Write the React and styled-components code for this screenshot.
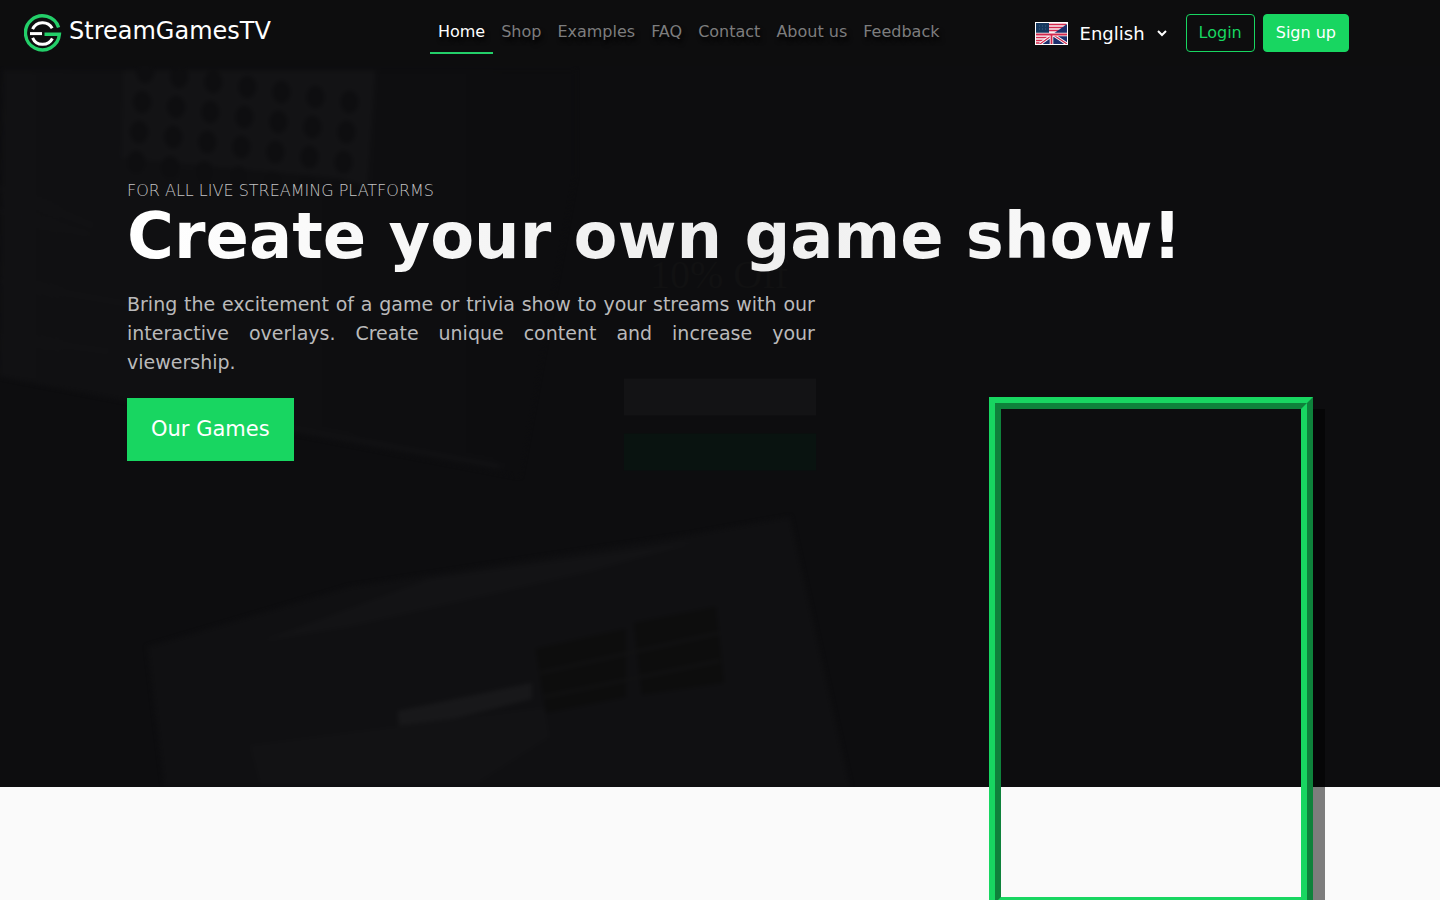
import React, { useState } from 'react';
import styled, { createGlobalStyle } from 'styled-components';

const links = ['Home', 'Shop', 'Examples', 'FAQ', 'Contact', 'About us', 'Feedback'];

const keys = [];
for (let row = 0; row < 4; row++) {
    for (let col = 0; col < 7; col++) {
        keys.push({ x: 146 + col * 34 - row * 3, y: 6 + row * 30 + col * 5 });
    }
}

const Logo = () => (
    <svg width="38" height="38" viewBox="0 0 38 38" fill="none" aria-hidden="true">
        <path d="M34.6 13.5A17 17 0 1 0 35.4 20.2H20.5" stroke="#23cf69" strokeWidth="3.4" />
        <path d="M28.2 14.2A11 11 0 0 0 8.6 15.2" stroke="#fff" strokeWidth="3" />
        <path d="M6 19.6H18" stroke="#fff" strokeWidth="3" />
        <path d="M8.6 23.8A11 11 0 0 0 28.4 24.5" stroke="#fff" strokeWidth="3" />
    </svg>
);

// stars and stripes on the top left half, union jack on the bottom right
const Flag = () => (
    <svg width="33" height="23" viewBox="0 0 33 23" aria-hidden="true">
        <rect width="33" height="23" fill="#f8eef2" />
        <path d="M14 2.5H31M14 5.5H28M14 8.5H24M1 15.5H13M1 18.5H9M1 21H5" stroke="#d3284c" strokeWidth="1.6" />
        <rect x="1" y="1" width="13" height="11" fill="#16395f" />
        <path d="M4 4H12M4 7H12" stroke="#3f6288" strokeWidth="1" strokeDasharray="1 2" />
        <path d="M32 2V22H4Z" fill="#1d2f6d" />
        <path d="M17 12L32 22M16 14L5 22" stroke="#fff" strokeWidth="3" />
        <path d="M17 12L32 22M16 14L5 22" stroke="#d3284c" strokeWidth="1.2" />
        <path d="M1 12.5H32M16.5 12V22" stroke="#fff" strokeWidth="3.6" />
        <path d="M1 12.5H32M16.5 12V22" stroke="#d3284c" strokeWidth="1.8" />
        <rect x=".5" y=".5" width="32" height="22" fill="none" stroke="#fff" />
    </svg>
);

// desk with keyboard, coupon card and notebook, almost black
const Desk = () => (
    <Backdrop viewBox="0 0 1440 720" preserveAspectRatio="xMidYMin slice" aria-hidden="true">
        <defs>
            <filter id="soft" colorInterpolationFilters="sRGB">
                <feGaussianBlur stdDeviation="2" />
            </filter>
            <linearGradient id="fade" x1="0" x2="1">
                <stop offset="0" stopColor="#111113" />
                <stop offset="1" stopColor="#0d0d0f" />
            </linearGradient>
        </defs>
        <g filter="url(#soft)">
            <path d="M4 4H575V110L520 410L0 310Z" fill="url(#fade)" />
            <path d="M124 4H376L368 120L340 112L122 92Z" fill="#131315" />
            {keys.map((k) => (
                <ellipse key={k.x + '-' + k.y} cx={k.x} cy={k.y} rx="9" ry="11" fill="#0e0e10" />
            ))}
            <path d="M0 122L95 160M0 145L90 168M0 215L170 245M0 270L110 285M200 345L500 400" stroke="#121214" strokeWidth="4" />
            <path d="M148 580L350 520L690 468L790 450L850 720H165Z" fill="#101012" />
            <path d="M260 575L430 512L700 474L590 505L350 560Z" fill="#131315" />
            <path d="M398 644L532 616V632L400 666Z" fill="#18181a" />
            <path d="M536 582L626 562V630L546 646ZM634 556L716 540L724 616L642 628Z" fill="#0d0d0d" />
            <path d="M540 606L720 566M544 630L720 594" stroke="#121213" strokeWidth="3" />
            <path d="M250 678L545 640L550 670L480 715H260Z" fill="#121214" />
        </g>
        <Coupon x="650" y="222">10% Off</Coupon>
        <rect x="624" y="312" width="192" height="37" fill="#131315" />
        <rect x="624" y="367" width="192" height="37" fill="#091310" />
    </Backdrop>
);

const App = () => {
    const [active, setActive] = useState('Home');
    return (
        <>
            <GlobalStyle />
            <Header>
                <Brand href="#home">
                    <Logo />
                    <span>StreamGamesTV</span>
                </Brand>
                <Nav>
                    {links.map((name) => (
                        <NavLink
                            key={name}
                            href={'#' + name.toLowerCase().replace(' ', '-')}
                            $active={name === active}
                            onClick={() => setActive(name)}
                        >
                            {name}
                        </NavLink>
                    ))}
                </Nav>
                <Account>
                    <Flag />
                    <Language aria-label="Language" defaultValue="en">
                        <option value="en">English</option>
                    </Language>
                    <Button>Login</Button>
                    <Button $filled>Sign up</Button>
                </Account>
            </Header>
            <Hero>
                <Desk />
                <Container>
                    <Tagline>For all live streaming platforms</Tagline>
                    <Title>Create your own game show!</Title>
                    <Row>
                        <Intro>
                            <Text>
                                Bring the excitement of a game or trivia show to your streams with our
                                interactive overlays. Create unique content and increase your viewership.
                            </Text>
                            <GamesLink href="#games">Our Games</GamesLink>
                        </Intro>
                        <Frame />
                    </Row>
                </Container>
            </Hero>
            <Games />
        </>
    );
};

export default App;

const GlobalStyle = createGlobalStyle`
    *{
        box-sizing: border-box;
    }
    body{
        margin: 0;
        background: #fafafa;
        color: #fff;
        font-family: "DejaVu Sans", sans-serif;
        font-size: 16px;
        line-height: 24px;
        overflow-x: hidden;
    }
    a{
        text-decoration: none;
    }
`

const Header = styled.header`
    display: flex;
    align-items: center;
    height: 66px;
    padding: 0 91px 0 24px;
    background: #0d0d0e;
`
const Brand = styled.a`
    display: flex;
    align-items: center;
    gap: 7px;
    color: #fff;
    font-size: 24px;
    span{
        padding-bottom: 4px;
    }
`
const Nav = styled.nav`
    display: flex;
    margin-left: 12%;
    white-space: nowrap;
`
const NavLink = styled.a`
    padding: 8px;
    color: ${(props) => (props.$active ? '#fff' : '#7d7d7e')};
    border-bottom: 2px solid ${(props) => (props.$active ? '#23cf69' : 'transparent')};
    text-shadow: 2px 4px 4px #000;
`
const Account = styled.div`
    display: flex;
    align-items: center;
    gap: 8px;
    margin-left: auto;
`
const Language = styled.select`
    width: 94px;
    margin-right: 8px;
    padding: 0;
    border: 0;
    background: #0d0d0e;
    color: #fff;
    font-family: inherit;
    font-size: 18px;
`
const Button = styled.button`
    height: 38px;
    padding: 0 12px 2px;
    border: 1px solid #18d661;
    border-radius: 4px;
    background: ${(props) => (props.$filled ? '#18d661' : 'transparent')};
    color: ${(props) => (props.$filled ? '#fff' : '#18d661')};
    font-family: inherit;
    font-size: 16px;
    white-space: nowrap;
    cursor: pointer;
`
const Hero = styled.section`
    position: relative;
    min-height: calc(80vh + 1px);
    padding: 113px 24px 0;
    background: #0d0d0f;
`
const Backdrop = styled.svg`
    position: absolute;
    top: 0;
    left: 0;
    width: 100%;
    height: 100%;
`
const Coupon = styled.text`
    fill: #111112;
    font-family: "Liberation Serif", serif;
    font-size: 40px;
`
const Container = styled.div`
    position: relative;
    max-width: 1186px;
    margin: 0 auto;
`
const Tagline = styled.p`
    margin: 0;
    color: #c4c4c5;
    font-weight: 200;
    text-transform: uppercase;
`
const Title = styled.h1`
    margin: 0;
    padding-bottom: 8px;
    font-size: 64px;
    line-height: 66px;
    background: linear-gradient(90deg, #fff, #eee 50%, #fff);
    background-clip: text;
    color: transparent;
`
const Row = styled.div`
    display: flex;
    justify-content: space-between;
    align-items: flex-start;
    margin-top: 13px;
`
const Intro = styled.div`
    width: 58%;
`
const Text = styled.p`
    margin: 0 0 21px;
    color: #bababb;
    font-size: 19px;
    line-height: 29px;
    text-align: justify;
`
const GamesLink = styled.a`
    display: inline-block;
    padding: 16px 24px;
    background: #18d661;
    color: #fff;
    font-size: 21px;
    line-height: 31px;
`
/* hangs over the edge of the hero */
const Frame = styled.div`
    width: 324px;
    height: 512px;
    margin: 107px 0 -240px;
    border: 12px ridge #18d661;
    box-shadow: 12px 12px 0 rgba(0, 0, 0, 0.5);
`
const Games = styled.section`
    min-height: 50vh;
`
